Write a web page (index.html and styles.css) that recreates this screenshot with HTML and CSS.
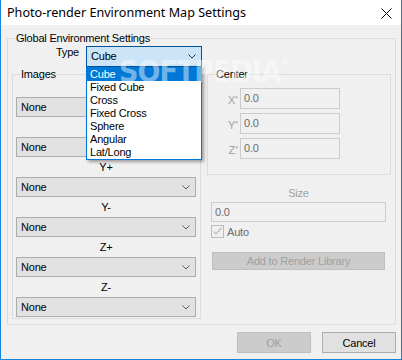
FILE: index.html
```html
<!DOCTYPE html>
<html>
<head>
	<title>Photo-render Environment Map Settings</title>
	<meta charset="utf-8">
	<link rel="stylesheet" href="styles.css">
</head>
<body>
	<div class="window">
		<div class="titlebar">
			<span class="title">Photo-render Environment Map Settings</span>
			<svg class="close" width="11" height="11" viewBox="0 0 11 11">
				<path d="M0.5 0.5 L10.5 10.5 M10.5 0.5 L0.5 10.5" stroke="#000" stroke-width="1" fill="none"/>
			</svg>
		</div>

		<div class="content">
			<div class="group outer">
				<span class="caption">Global Environment Settings</span>

				<div class="type-row">
					<label class="type-label">Type</label>
					<div class="combo-wrap">
						<div class="combo active">Cube
							<svg class="chev" width="8" height="5" viewBox="0 0 8 5"><path d="M0.5 0.5 L4 4 L7.5 0.5" stroke="#333" fill="none"/></svg>
						</div>
						<ul class="droplist">
							<li class="selected">Cube</li>
							<li>Fixed Cube</li>
							<li>Cross</li>
							<li>Fixed Cross</li>
							<li>Sphere</li>
							<li>Angular</li>
							<li>Lat/Long</li>
						</ul>
					</div>
				</div>

				<div class="columns">
					<div class="group images">
						<span class="caption">Images</span>
						<div class="face">X+</div>
						<div class="combo">None<svg class="chev" width="8" height="5" viewBox="0 0 8 5"><path d="M0.5 0.5 L4 4 L7.5 0.5" stroke="#606060" fill="none"/></svg></div>
						<div class="face">X-</div>
						<div class="combo">None<svg class="chev" width="8" height="5" viewBox="0 0 8 5"><path d="M0.5 0.5 L4 4 L7.5 0.5" stroke="#606060" fill="none"/></svg></div>
						<div class="face">Y+</div>
						<div class="combo">None<svg class="chev" width="8" height="5" viewBox="0 0 8 5"><path d="M0.5 0.5 L4 4 L7.5 0.5" stroke="#606060" fill="none"/></svg></div>
						<div class="face">Y-</div>
						<div class="combo">None<svg class="chev" width="8" height="5" viewBox="0 0 8 5"><path d="M0.5 0.5 L4 4 L7.5 0.5" stroke="#606060" fill="none"/></svg></div>
						<div class="face">Z+</div>
						<div class="combo">None<svg class="chev" width="8" height="5" viewBox="0 0 8 5"><path d="M0.5 0.5 L4 4 L7.5 0.5" stroke="#606060" fill="none"/></svg></div>
						<div class="face">Z-</div>
						<div class="combo">None<svg class="chev" width="8" height="5" viewBox="0 0 8 5"><path d="M0.5 0.5 L4 4 L7.5 0.5" stroke="#606060" fill="none"/></svg></div>
					</div>

					<div class="right-col">
						<div class="group center">
							<span class="caption">Center</span>
							<div class="coords">
								<span class="axis">X<small>*</small></span><div class="textbox">0.0</div>
								<span class="axis">Y<small>*</small></span><div class="textbox">0.0</div>
								<span class="axis">Z<small>*</small></span><div class="textbox">0.0</div>
							</div>
						</div>

						<div class="size">
							<div class="size-label">Size</div>
							<div class="textbox wide">0.0</div>
							<div class="check-row">
								<span class="checkbox">
									<svg width="11" height="11" viewBox="0 0 11 11"><path d="M1.5 5.5 L4 8 L9.5 2" stroke="#bcbcbc" stroke-width="1.2" fill="none"/></svg>
								</span>
								<span class="check-label">Auto</span>
							</div>
							<button class="btn add" disabled>Add to Render Library</button>
						</div>
					</div>
				</div>
			</div>

			<div class="footer">
				<button class="btn" disabled>OK</button>
				<button class="btn">Cancel</button>
			</div>
		</div>

		<div class="watermark">SOFTPEDIA<sup>&reg;</sup></div>
	</div>
</body>
</html>
```

FILE: styles.css
```css
*{
	box-sizing: border-box;
}
body{
	margin: 0;
	font-family: 'Liberation Sans', Arial, sans-serif;
	font-size: 11px;
	letter-spacing: -0.2px;
	color: #000;
}
.window{
	position: relative;
	width: 402px;
	height: 360px;
	background: #f0f0f0;
	border: 1px solid #1883d7;
	border-top: none;
	overflow: hidden;
}
.titlebar{
	display: flex;
	height: 25px;
	background: #fff;
	margin: 0 -1px 0 -1px;
	padding-left: 7px;
}
.title{
	flex: 1;
	font-family: 'Noto Sans', 'Liberation Sans', sans-serif;
	font-size: 12.6px;
	letter-spacing: 0;
	line-height: 25px;
}
.close{
	margin: 8px 10px 0 0;
}
.content{
	padding: 13px 5px 0 6px;
}
.group{
	position: relative;
	border: 1px solid #dcdcdc;
}
.caption{
	position: absolute;
	top: -8px;
	left: 7px;
	padding: 0 1px;
	line-height: 14px;
	background: #f0f0f0;
}
.outer{
	height: 287px;
	padding: 7px 0 0 4px;
}
.type-row{
	display: flex;
	height: 21px;
}
.type-label{
	width: 67px;
	margin-right: 7px;
	text-align: right;
	line-height: 13px;
}
.combo-wrap{
	position: relative;
}
.combo{
	position: relative;
	height: 20px;
	width: 180px;
	padding-left: 4px;
	line-height: 18px;
	background: #e1e1e1;
	border: 1px solid #adadad;
}
.combo.active{
	width: 116px;
	height: 21px;
	line-height: 19px;
	background: #cce4f7;
	border-color: #005499;
}
.chev{
	position: absolute;
	right: 5px;
	top: 7px;
}
.droplist{
	position: absolute;
	top: 21px;
	left: 0;
	width: 116px;
	margin: 0;
	padding: 0;
	list-style: none;
	background: #fff;
	border: 1px solid #0078d7;
	box-shadow: 2px 2px 3px rgba(0,0,0,0.35);
	z-index: 2;
}
.droplist li{
	height: 13px;
	line-height: 13px;
	padding-left: 3px;
}
.droplist .selected{
	background: #0078d7;
	color: #fff;
}
.columns{
	display: flex;
	gap: 6px;
	margin-top: 7px;
}
.images{
	width: 189px;
	height: 245px;
	padding: 2px 4px 0 3px;
}
.face{
	height: 20px;
	line-height: 20px;
	text-align: center;
}
.right-col{
	width: 184px;
}
.center{
	height: 101px;
	padding: 13px 0 0 4px;
}
.coords{
	display: grid;
	grid-template-columns: 26px 100px;
	grid-auto-rows: 21px;
	column-gap: 2px;
	row-gap: 4px;
}
.axis{
	text-align: right;
	line-height: 21px;
	color: #a0a0a0;
}
.axis small{
	font-size: 8px;
	vertical-align: 3px;
}
.textbox{
	height: 21px;
	padding-left: 3px;
	line-height: 19px;
	color: #6d6d6d;
	background: #f0f0f0;
	border: 1px solid #cccccc;
}
.size{
	margin-left: 4px;
}
.size-label{
	margin-top: 10px;
	width: 175px;
	line-height: 17px;
	text-align: center;
	color: #a0a0a0;
}
.textbox.wide{
	width: 175px;
	height: 20px;
	line-height: 18px;
}
.check-row{
	display: flex;
	align-items: center;
	margin-top: 3px;
	height: 13px;
}
.checkbox{
	width: 13px;
	height: 13px;
	padding: 0;
	border: 1px solid #bcbcbc;
	line-height: 0;
}
.check-label{
	margin-left: 3px;
	color: #6d6d6d;
}
.btn{
	height: 21px;
	width: 74px;
	padding: 0;
	font-family: 'Liberation Sans', Arial, sans-serif;
	font-size: 11px;
	letter-spacing: -0.2px;
	color: #000;
	background: #e1e1e1;
	border: 1px solid #adadad;
}
.btn:disabled{
	color: #a0a0a0;
	background: #cccccc;
	border-color: #bfbfbf;
}
.btn.add{
	display: block;
	width: 173px;
	height: 18px;
	margin: 14px 0 0 1px;
}
.footer{
	display: flex;
	justify-content: flex-end;
	gap: 11px;
	margin-top: 7px;
}
.watermark{
	position: absolute;
	left: 118px;
	top: 54px;
	font-family: 'DejaVu Sans Condensed', 'DejaVu Sans', sans-serif;
	font-weight: bold;
	font-size: 30px;
	letter-spacing: -1px;
	color: rgba(255,255,255,0.45);
	z-index: 3;
	pointer-events: none;
}
.watermark sup{
	font-size: 10px;
	vertical-align: 16px;
}
```
